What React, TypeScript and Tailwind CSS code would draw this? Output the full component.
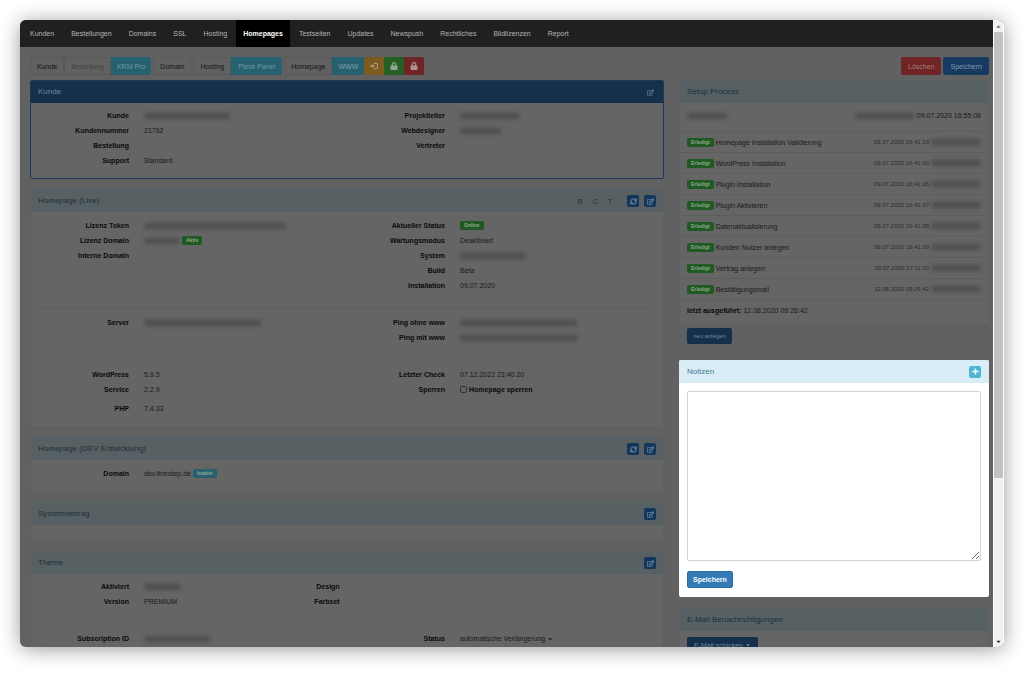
import { ReactNode } from "react";
import clsx from "clsx";
import { FaCaretDown, FaCaretUp, FaLock, FaPlus, FaRegEdit } from "react-icons/fa";
import { LuRefreshCw } from "react-icons/lu";

const NAV = [
  "Kunden",
  "Bestellungen",
  "Domains",
  "SSL",
  "Hosting",
  "Homepages",
  "Testseiten",
  "Updates",
  "Newspush",
  "Rechtliches",
  "Bildlizenzen",
  "Report",
];

const STEPS = [
  ["Homepage Installation Validierung", "09.07.2020 16:41:18"],
  ["WordPress Installation", "09.07.2020 16:41:30"],
  ["Plugin Installation", "09.07.2020 16:41:36"],
  ["Plugin Aktivieren", "09.07.2020 16:41:37"],
  ["Datenaktualisierung", "09.07.2020 16:41:38"],
  ["Kunden Nutzer anlegen", "09.07.2020 16:41:39"],
  ["Vertrag anlegen", "09.07.2020 17:11:30"],
  ["Bestätigungsmail", "12.08.2020 09:26:42"],
];

// Redacted value
const Blurred = ({ className }: { className: string }) => (
  <span
    aria-hidden="true"
    className={clsx("inline-block h-1.5 rounded-sm bg-[#4e4e4e] blur-[2px]", className)}
  />
);

const Badge = ({
  children,
  className = "bg-[#1f5a22]",
}: {
  children: ReactNode;
  className?: string;
}) => (
  <span
    className={clsx(
      "inline-flex h-[9px] shrink-0 items-center rounded-xs px-1 text-[5px] font-bold text-[#8fa88f]",
      className
    )}
  >
    {children}
  </span>
);

const ToolButton = ({
  children,
  className = "border border-[#585858] text-[#151515]",
  label,
}: {
  children: ReactNode;
  className?: string;
  label?: string;
}) => (
  <button
    type="button"
    aria-label={label}
    className={clsx("flex h-[18px] items-center justify-center px-1.5", className)}
  >
    {children}
  </button>
);

const LoginIcon = () => (
  <svg width="9" height="8" viewBox="0 0 18 16" fill="none" aria-hidden="true">
    <path d="M9 2h4a4 4 0 0 1 4 4v4a4 4 0 0 1-4 4H9" stroke="currentColor" strokeWidth="2.5" />
    <path d="M0 6.5h5V3l6 5-6 5V9.5H0z" fill="currentColor" />
  </svg>
);

const IconButton = ({ label, children }: { label: string; children: ReactNode }) => (
  <button
    type="button"
    aria-label={label}
    className="flex size-3 items-center justify-center rounded-xs bg-[#14365a] text-[#8496a8]"
  >
    {children}
  </button>
);

const Refresh = () => (
  <IconButton label="Aktualisieren">
    <LuRefreshCw size={7} strokeWidth={3} />
  </IconButton>
);

const Edit = () => (
  <IconButton label="Bearbeiten">
    <FaRegEdit size={7} />
  </IconButton>
);

const Panel = ({
  title,
  actions,
  primary,
  children,
}: {
  title: string;
  actions?: ReactNode;
  primary?: boolean;
  children?: ReactNode;
}) => (
  <section
    className={clsx(
      "rounded-xs border bg-[#656565]",
      primary ? "border-[#1b3a58]" : "border-[#5a6265]"
    )}
  >
    <header
      className={clsx(
        "flex h-[22px] items-center justify-between px-[7px]",
        primary ? "bg-[#15304a] text-[#72869a]" : "bg-[#576062] text-[#1e3038]"
      )}
    >
      <h2 className="text-[8px]">{title}</h2>
      <div className="flex items-center gap-[5px]">{actions}</div>
    </header>
    {children}
  </section>
);

const Field = ({
  label,
  children,
  className,
}: {
  label: string;
  children?: ReactNode;
  className?: string;
}) => (
  <div className={clsx("flex h-[15px] items-center gap-[15px]", className)}>
    <dt className="w-[98px] shrink-0 text-right font-bold text-[#0a0a0a]">{label}</dt>
    <dd className="flex items-center gap-0.5 whitespace-nowrap">{children}</dd>
  </div>
);

const Notes = () => (
  <section className="rounded-xs bg-white pb-[9px]">
    <header className="flex h-[23px] items-center justify-between rounded-t-xs bg-[#d9edf7] px-2 text-[#46758c]">
      <h2 id="notes-title" className="text-[8px]">
        Notizen
      </h2>
      <button
        type="button"
        aria-label="Notiz hinzufügen"
        className="flex size-3 items-center justify-center rounded-xs bg-[#4fb7d6] text-white"
      >
        <FaPlus size={7} />
      </button>
    </header>
    <div className="px-2 pt-2">
      <textarea
        aria-labelledby="notes-title"
        className="block h-[170px] w-full rounded-xs border border-[#d4d4d4] bg-white p-1 text-[#333]"
      />
      <button
        type="button"
        className="mt-2.5 h-[17px] rounded-xs border border-[#2e6da4] bg-[#337ab7] px-[5px] font-bold text-white"
      >
        Speichern
      </button>
    </div>
  </section>
);

const SetupProcess = () => (
  <Panel title="Setup Process">
    <div className="flex h-[29px] items-center justify-between border-b border-[#5d5d5d] px-[7px] pb-[3px]">
      <Blurred className="w-10" />
      <span className="flex items-center gap-0.5">
        <Blurred className="w-[60px]" />
        09.07.2020 16:55:08
      </span>
    </div>
    <ul>
      {STEPS.map(([name, date]) => (
        <li
          key={name}
          className="flex h-[21px] items-center border-b border-[#5d5d5d] px-[7px]"
        >
          <Badge>Erledigt</Badge>
          <span className="ml-0.5 grow">{name}</span>
          <span className="text-[6px] text-[#2c2c2c]">{date}</span>
          <Blurred className="ml-0.5 w-[50px]" />
        </li>
      ))}
    </ul>
    <p className="flex h-[23px] items-center gap-0.5 px-[7px] pb-[3px]">
      <b className="text-[#0a0a0a]">letzt ausgeführt:</b> 12.08.2020 09:26:42
    </p>
    <footer className="bg-[#606060] px-[7px] pt-[5px] pb-1">
      <button
        type="button"
        className="block h-4 rounded-xs bg-[#14304a] px-1.5 text-[6px] text-[#74889b]"
      >
        neu anlegen
      </button>
    </footer>
  </Panel>
);

const Toolbar = () => (
  <div className="flex justify-between pt-2.5 pr-1 pb-[5px] pl-2.5">
    <div className="flex gap-0.5">
      <div className="flex">
        <ToolButton>Kunde</ToolButton>
        <ToolButton className="border border-[#585858] text-[#444]">Bestellung</ToolButton>
        <ToolButton className="rounded-r-xs bg-[#27606e] text-[#6f99a3]">KRM Pro</ToolButton>
      </div>
      <ToolButton>Domain</ToolButton>
      <div className="flex">
        <ToolButton>Hosting</ToolButton>
        <ToolButton className="rounded-r-xs bg-[#27606e] px-[7px] text-[#6f99a3]">
          Plesk Panel
        </ToolButton>
      </div>
      <div className="flex">
        <ToolButton>Homepage</ToolButton>
        <ToolButton className="bg-[#27606e] text-[#7fa3ac]">WWW</ToolButton>
        <ToolButton label="Anmelden" className="w-5 bg-[#7d5a20] text-[#a89878]">
          <LoginIcon />
        </ToolButton>
        <ToolButton label="Entsperren" className="w-5 bg-[#245f24] text-[#8fa88f]">
          <FaLock size={8} />
        </ToolButton>
        <ToolButton label="Sperren" className="w-5 rounded-r-xs bg-[#702426] text-[#b09494]">
          <FaLock size={8} />
        </ToolButton>
      </div>
    </div>
    <div className="flex gap-0.5">
      <ToolButton className="rounded-xs bg-[#702426] px-[7px] text-[#a87c7c]">
        Löschen
      </ToolButton>
      <ToolButton className="rounded-xs bg-[#163a60] px-[7px] text-[#8399ae]">
        Speichern
      </ToolButton>
    </div>
  </div>
);

const MainColumn = () => (
  <div className="flex min-w-0 flex-col gap-2.5">
    <Panel
      title="Kunde"
      primary
      actions={
        <button type="button" aria-label="Bearbeiten" className="px-0.5">
          <FaRegEdit size={7} />
        </button>
      }
    >
      <dl className="grid grid-cols-2 pt-[5px] pb-2.5">
        <div>
          <Field label="Kunde">
            <Blurred className="w-[86px]" />
          </Field>
          <Field label="Kundennummer">21762</Field>
          <Field label="Bestellung" />
          <Field label="Support">Standard</Field>
        </div>
        <div>
          <Field label="Projektleiter">
            <Blurred className="w-[60px]" />
          </Field>
          <Field label="Webdesigner">
            <Blurred className="w-[42px]" />
          </Field>
          <Field label="Vertreter" />
        </div>
      </dl>
    </Panel>

    <Panel
      title="Homepage (Live)"
      actions={
        <>
          <div className="mr-2.5 flex gap-2.5 text-[7px]">
            <span>R</span>
            <span>C</span>
            <span>T</span>
          </div>
          <Refresh />
          <Edit />
        </>
      }
    >
      <dl className="grid grid-cols-2 pt-1.5 pb-[15px]">
        <div>
          <Field label="Lizenz Token">
            <Blurred className="w-[142px]" />
          </Field>
          <Field label="Lizenz Domain">
            <Blurred className="w-9" />
            <Badge>Aktiv</Badge>
          </Field>
          <Field label="Interne Domain" />
        </div>
        <div>
          <Field label="Aktueller Status">
            <Badge>Online</Badge>
          </Field>
          <Field label="Wartungsmodus">Deaktiviert</Field>
          <Field label="System">
            <Blurred className="w-[66px]" />
          </Field>
          <Field label="Build">Beta</Field>
          <Field label="Installation">09.07.2020</Field>
        </div>
      </dl>
      <hr className="mx-2.5 border-[#5e5e5e]" />
      <dl className="grid grid-cols-2 pt-1.5 pb-[13px]">
        <Field label="Server">
          <Blurred className="w-[118px]" />
        </Field>
        <div>
          <Field label="Ping ohne www">
            <Blurred className="w-[118px]" />
          </Field>
          <Field label="Ping mit www">
            <Blurred className="w-[118px]" />
          </Field>
        </div>
      </dl>
      <hr className="mx-2.5 border-[#626262]" />
      <dl className="grid grid-cols-2 pt-2 pb-2.5">
        <div>
          <Field label="WordPress">5.9.5</Field>
          <Field label="Service">2.2.9</Field>
          <Field label="PHP" className="mt-1">
            7.4.33
          </Field>
        </div>
        <div>
          <Field label="Letzter Check">07.12.2022 23:40:20</Field>
          <Field label="Sperren">
            <label className="flex items-center gap-0.5 font-bold text-[#0a0a0a]">
              <input
                type="checkbox"
                className="size-[7px] appearance-none rounded-xs border border-[#333]"
              />
              Homepage sperren
            </label>
          </Field>
        </div>
      </dl>
    </Panel>

    <Panel
      title="Homepage (DEV Entwicklung)"
      actions={
        <>
          <Refresh />
          <Edit />
        </>
      }
    >
      <dl className="pt-1.5 pb-2.5">
        <Field label="Domain">
          dev.finestep.de
          <Badge className="bg-[#27606e]">Inaktiv</Badge>
        </Field>
      </dl>
    </Panel>

    <Panel title="Systemvertrag" actions={<Edit />}>
      <div className="h-[15px]" />
    </Panel>

    <Panel title="Theme" actions={<Edit />}>
      <dl className="grid grid-cols-3 pt-[5px] pb-5">
        <div>
          <Field label="Aktiviert">
            <Blurred className="w-[37px]" />
          </Field>
          <Field label="Version">PREMIUM</Field>
        </div>
        <div>
          <Field label="Design" />
          <Field label="Farbset" />
        </div>
      </dl>
      <dl className="grid grid-cols-2 pt-0.5 pb-2.5">
        <Field label="Subscription ID">
          <Blurred className="w-[66px]" />
        </Field>
        <Field label="Status">
          automatische Verlängerung <FaCaretDown size={6} />
        </Field>
      </dl>
    </Panel>
  </div>
);

const SideColumn = () => (
  <div className="flex min-w-0 flex-col gap-[11px]">
    <SetupProcess />
    <Notes />
    <Panel title="E-Mail Benachrichtigungen">
      <div className="px-[7px] py-1.5">
        <button
          type="button"
          className="flex h-4 items-center gap-0.5 rounded-xs bg-[#14304a] px-[7px] text-[#74889b]"
        >
          E-Mail schicken <FaCaretDown size={6} />
        </button>
      </div>
    </Panel>
  </div>
);

export default function App() {
  return (
    <div className="h-screen bg-white px-5 pt-5 pb-[27px] font-['Liberation_Sans',Arial,sans-serif] text-[7px] leading-none text-[#1a1a1a]">
      <div className="flex h-full overflow-hidden rounded-md bg-[#616161] shadow-[0_2px_20px_rgba(0,0,0,0.4)]">
        <div className="min-w-0 grow overflow-hidden">
          <nav className="flex h-[27px] gap-px bg-[#202020] pl-0.5">
            {NAV.map((item) => (
              <a
                key={item}
                href="#"
                className={clsx(
                  "flex items-center",
                  item === "Homepages"
                    ? "bg-black px-[7px] font-bold text-white"
                    : "px-2 text-[#b4b4b4]"
                )}
              >
                {item}
              </a>
            ))}
          </nav>
          <Toolbar />
          <main className="grid grid-cols-[634fr_310fr] gap-[15px] pr-1 pl-2.5">
            <MainColumn />
            <SideColumn />
          </main>
        </div>
        <div
          aria-hidden="true"
          className="flex w-[11px] shrink-0 flex-col border-x border-white bg-[#f1f1f1]"
        >
          <div className="flex h-3 shrink-0 items-center justify-center text-[#777]">
            <FaCaretUp size={7} />
          </div>
          <div className="grow">
            <div className="h-[74%] bg-[#c1c1c1]" />
          </div>
          <div className="flex h-3 shrink-0 items-center justify-center text-[#222]">
            <FaCaretDown size={7} />
          </div>
        </div>
      </div>
    </div>
  );
}
